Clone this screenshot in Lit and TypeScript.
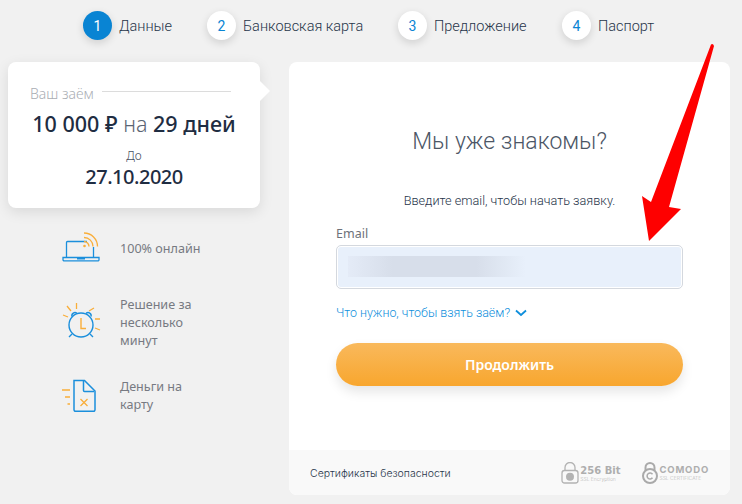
import { LitElement, html, css, svg } from "lit";
import { customElement } from "lit/decorators.js";

const steps = [
  { n: 1, t: "Данные", w: 124 },
  { n: 2, t: "Банковская карта", w: 191 },
  { n: 3, t: "Предложение", w: 164 },
  { n: 4, t: "Паспорт", w: 100 },
];

const laptop = svg`<svg width="40" height="36" viewBox="0 0 40 36" fill="none">
  <path d="M4.500 26V11.500a1 1 0 0 1 1-1H25M31.500 16v10" stroke="#1b8fdc" stroke-width="1.300"/>
  <path d="M1 26.500h36v2.200a1.200 1.200 0 0 1-1.200 1.200H2.200A1.200 1.200 0 0 1 1 28.700Z" stroke="#1b8fdc" stroke-width="1.300"/>
  <path d="M15 27h8v1.500h-8z" fill="#1b8fdc"/>
  <circle cx="22.500" cy="15" r="1.300" fill="#f9ae3a"/>
  <path d="M22 10.500a5 5 0 0 1 5 5M22 6.500a9 9 0 0 1 9 9M22 2a13.500 13.500 0 0 1 13.500 13.500" stroke="#f9ae3a" stroke-width="1.300"/>
</svg>`;

const clock = svg`<svg width="40" height="44" viewBox="0 0 40 44" fill="none">
  <circle cx="19" cy="24" r="12" stroke="#1b8fdc" stroke-width="1.400"/>
  <path d="M10 15.500a3 3 0 0 1 5-3M24 12.500a3 3 0 0 1 5 3M10 33l-3 3M28 33l3 3" stroke="#1b8fdc" stroke-width="1.400"/>
  <path d="M19 17v10.500h5" stroke="#f9ae3a" stroke-width="1.400"/>
  <path d="M5 5l4 5M14.500 2v6M32 7l-5 3M1 14l5 2M33 18h5M33 27l5 2" stroke="#f9ae3a" stroke-width="1.300"/>
</svg>`;

const doc = svg`<svg width="40" height="36" viewBox="0 0 40 36" fill="none">
  <path d="M12 2.500h10.500L33 13v18.800a1.500 1.500 0 0 1-1.500 1.500H13.500A1.500 1.500 0 0 1 12 31.800Z" stroke="#1b8fdc" stroke-width="1.500"/>
  <path d="M21.500 3v9.500a1 1 0 0 0 1 1H32" stroke="#1b8fdc" stroke-width="1.500"/>
  <path d="M18.500 21l7 7M25.500 21l-7 7" stroke="#f9ae3a" stroke-width="1.300"/>
  <path d="M0 12h8M3 19h5M5.500 26H8" stroke="#f9ae3a" stroke-width="1.300"/>
</svg>`;

const lockA = svg`<svg width="18" height="22" viewBox="0 0 18 22" fill="none">
  <path d="M4 9V5.500a5 5 0 0 1 10 0V9" stroke="#b3b3b3" stroke-width="1.300"/>
  <rect x="1" y="8.500" width="16" height="12.500" rx="2.500" stroke="#b3b3b3" stroke-width="1.300"/>
  <circle cx="9" cy="14.800" r="4" fill="#b3b3b3"/>
</svg>`;

const lockB = svg`<svg width="18" height="22" viewBox="0 0 18 22" fill="none">
  <path d="M4.500 8V5.500a4.500 4.500 0 0 1 9 0V8" stroke="#aaa" stroke-width="2"/>
  <circle cx="9" cy="14" r="7" stroke="#aaa" stroke-width="2"/>
  <path d="M11.500 12.200a3 3 0 1 0 0 3.600" stroke="#aaa" stroke-width="1.500"/>
</svg>`;

@customElement("app-root")
export class AppRoot extends LitElement {
  static styles = css`
    :host { display: block; position: relative; width: 742px; height: 504px; overflow: hidden; background: #f1f1f1; font-family: "Roboto", sans-serif; color: #1f2d42; }
    .steps { display: flex; height: 62px; padding: 11px 0 0 83px; box-sizing: border-box; }
    .step { display: flex; height: 29px; align-items: center; gap: 7px; font-size: 14.500px; font-weight: 300; color: #27354a; flex: none; }
    .step span { padding-top: 2px; }
    .num { width: 29px; height: 29px; border-radius: 50%; background: #fff; color: #0984d3; box-shadow: 0 3px 8px rgba(0,0,0,.14); display: flex; align-items: center; justify-content: center; font-size: 14px; font-weight: 400; }
    .num.on { background: #0984d3; color: #fff; }
    .main { display: flex; align-items: flex-start; padding-left: 8px; }
    .left { width: 252px; flex: none; margin-right: 29px; }
    .loan { position: relative; width: 252px; height: 146px; box-sizing: border-box; padding: 23px 22px 0; background: #fff; border-radius: 8px; box-shadow: 0 4px 14px rgba(0,0,0,.10); text-align: center; font-family: "Noto Sans", sans-serif; }
    .loan::after { content: ""; position: absolute; right: -10px; top: 19px; width: 0; height: 0; border-left: 10px solid #fff; border-top: 10px solid transparent; border-bottom: 10px solid transparent; }
    .yl { display: flex; align-items: flex-start; gap: 8px; font-size: 14px; line-height: 18px; color: #a9adb3; font-weight: 300; }
    .yl i { display: block; width: 129px; height: 1px; background: #dcdcdc; margin-top: 6px; flex: none; }
    .sum { margin-top: 6px; margin-left: -22px; margin-right: -22px; font-size: 21.500px; line-height: 30px; font-weight: 500; color: #1f2d42; white-space: nowrap; }
    .sum span { font-weight: 300; color: #5a6473; }
    .until { margin-top: 10px; font-size: 12px; line-height: 14px; font-weight: 300; color: #47505f; }
    .date { margin-top: 3px; font-size: 20px; line-height: 22px; letter-spacing: -.5px; font-weight: 500; color: #1f2d42; }
    .feats { padding: 23px 0 0 54px; font-family: "Noto Sans", sans-serif; font-size: 12.600px; line-height: 18px; color: #777a82; }
    .feat { display: flex; align-items: center; }
    .feat + .feat { margin-top: 29px; }
    .feat:last-child { margin-top: 28px; }
    .feat .ic { width: 58px; flex: none; display: flex; }
    .feat .tx { width: 90px; }
    .card { width: 441px; height: 433px; flex: none; background: #fff; border-radius: 8px; overflow: hidden; display: flex; flex-direction: column; }
    .body { flex: 1; padding: 63px 47px 0; display: flex; flex-direction: column; }
    h1 { margin: 0; font-size: 23px; line-height: 34px; font-weight: 300; text-align: center; color: #4c5666; }
    .sub { margin-top: 33px; font-size: 12.700px; line-height: 18px; font-weight: 300; text-align: center; color: #27354a; }
    .lab { margin-top: 15px; font-family: "Noto Sans", sans-serif; font-size: 12.500px; line-height: 18px; color: #6d7179; }
    .inp { margin-top: 2px; height: 44px; box-sizing: border-box; background: #e8f0fb; border: 1px solid #d4d8de; box-shadow: inset 0 0 0 1px #fff; border-radius: 5px; padding: 10px 11px; }
    .blur { width: 178px; height: 21px; background: linear-gradient(90deg, #e4ebf7, #d7deea 25%, #d7deea 72%, #e8f0fb); }
    .link { margin-top: 15px; display: flex; align-items: center; gap: 5px; font-size: 12.450px; line-height: 18px; font-weight: 300; color: #0f8fdc; }
    .btn { margin-top: 21px; height: 43px; border-radius: 22px; background: linear-gradient(#f9b95c, #f8a62e); color: #fff; box-shadow: 0 6px 12px rgba(0,0,0,.10); display: flex; align-items: center; justify-content: center; font-family: "Noto Sans", sans-serif; font-size: 14px; font-weight: 600; }
    .foot { height: 45px; flex: none; box-sizing: border-box; padding: 1px 21px 0; background: #f9f9f9; display: flex; align-items: center; font-family: "Inter", sans-serif; font-size: 10.500px; font-weight: 300; color: #27354a; }
    .badges { margin-left: auto; display: flex; align-items: center; color: #aaa; }
    .bd { display: flex; align-items: center; gap: 1px; }
    .bd + .bd { margin-left: 20px; }
    .big { font-family: "DejaVu Sans", sans-serif; font-weight: 700; font-size: 10px; line-height: 11px; color: #aeaeae; white-space: nowrap; }
    .small { font-size: 5px; line-height: 6px; color: #bbb; font-family: "Inter", sans-serif; white-space: nowrap; }
    .com { font-size: 9.500px; line-height: 10px; letter-spacing: .8px; font-weight: 700; color: #aeaeae; font-family: "Inter", sans-serif; }
    .arrow { position: absolute; left: 0; top: 0; pointer-events: none; }
  `;

  render() {
    return html`
      <div class="steps">
        ${steps.map(
          (s) => html`<div class="step" style="width:${s.w}px"><div class="num ${s.n === 1 ? "on" : ""}">${s.n}</div><span>${s.t}</span></div>`
        )}
      </div>
      <div class="main">
        <div class="left">
          <div class="loan">
            <div class="yl">Ваш заём<i></i></div>
            <div class="sum">10 000 ₽ <span>на</span> 29 дней</div>
            <div class="until">До</div>
            <div class="date">27.10.2020</div>
          </div>
          <div class="feats">
            <div class="feat"><div class="ic">${laptop}</div><div class="tx">100% онлайн</div></div>
            <div class="feat"><div class="ic">${clock}</div><div class="tx">Решение за несколько минут</div></div>
            <div class="feat"><div class="ic">${doc}</div><div class="tx">Деньги на карту</div></div>
          </div>
        </div>
        <div class="card">
          <div class="body">
            <h1>Мы уже знакомы?</h1>
            <div class="sub">Введите email, чтобы начать заявку.</div>
            <div class="lab">Email</div>
            <div class="inp"><div class="blur"></div></div>
            <div class="link">Что нужно, чтобы взять заём?
              <svg width="12" height="8" viewBox="0 0 12 8" fill="none"><path d="M1 1.500l5 4.500 5-4.500" stroke="#0f8fdc" stroke-width="1.800"/></svg>
            </div>
            <div class="btn">Продолжить</div>
          </div>
          <div class="foot">Сертификаты безопасности
            <div class="badges">
              <div class="bd">${lockA}<div><div class="big">256 Bit</div><div class="small">SSL Encryption</div></div></div>
              <div class="bd">${lockB}<div><div class="com">COMODO</div><div class="small">SSL CERTIFICATE</div></div></div>
            </div>
          </div>
        </div>
      </div>
      <svg class="arrow" width="742" height="504"><path d="M711 44.500Q713 43 714 46L669 207L681 209L649 241L642 196L651 202Z" fill="#fe0000"/></svg>
    `;
  }
}
